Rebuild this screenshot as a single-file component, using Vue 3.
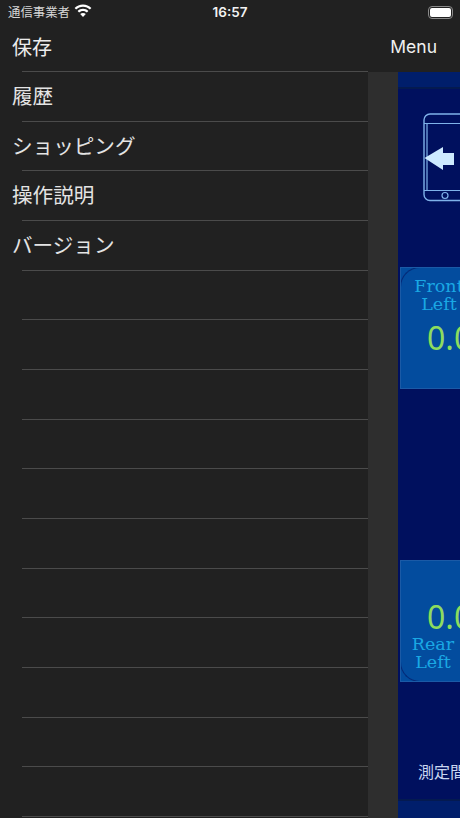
<script setup>
const labels = ['履歴', 'ショッピング', '操作説明', 'バージョン', '', '', '', '', '', '', '', '', '', '', '', '']
</script>

<template>
  <div class="screen">
    <header class="status">
      <div class="status-left">
        <span class="carrier">通信事業者</span>
        <svg class="wifi" viewBox="0 0 18 13" width="18" height="13" aria-hidden="true">
          <path d="M9 0.6C5.7 0.6 2.8 1.9 0.6 4l1.5 1.6C3.9 3.9 6.3 2.8 9 2.8s5.1 1.1 6.9 2.8L17.4 4C15.2 1.9 12.3 0.6 9 0.6z" fill="#fff" />
          <path d="M9 4.8c-2.1 0-4 .8-5.4 2.2l1.5 1.6C6.1 7.6 7.5 7 9 7s2.9.6 3.9 1.6L14.4 7C13 5.6 11.1 4.8 9 4.8z" fill="#fff" />
          <path d="M9 9c-1.1 0-2 .4-2.8 1.1L9 13l2.8-2.9C11 9.4 10.1 9 9 9z" fill="#fff" />
        </svg>
      </div>
      <span class="time">16:57</span>
      <div class="battery"><i class="battery-level"></i></div>
    </header>

    <nav class="nav">
      <span class="nav-title">保存</span>
      <span class="nav-menu">Menu</span>
    </nav>

    <main class="body">
      <section class="list">
        <div class="sep"></div>
        <template v-for="(label, i) in labels" :key="i">
          <div class="row">{{ label }}</div>
          <div class="sep"></div>
        </template>
      </section>

      <div class="strip"></div>

      <section class="panel">
        <div class="band"></div>
        <svg class="phone" viewBox="0 0 42 89" width="42" height="89" aria-hidden="true">
          <rect x="1" y="1" width="42" height="86.5" rx="6" fill="none" stroke="#7fb2ea" stroke-width="1.4" />
          <path d="M1 10.5H43M1 77.5H43M4 10.5V77.500" fill="none" stroke="#7fb2ea" stroke-width="1.2" />
          <circle cx="22" cy="82.500" r="3" fill="none" stroke="#7fb2ea" stroke-width="1.2" />
          <path d="M1.500 45 20 34V40H31V52H20V57z" fill="#cdeaff" />
        </svg>

        <article class="card card-front">
          <div class="name name-front">Front<br />Left</div>
          <div class="value value-front">0.0</div>
        </article>

        <article class="card card-rear">
          <div class="value value-rear">0.0</div>
          <div class="name name-rear">Rear<br />Left</div>
        </article>

        <div class="interval">測定間隔</div>
        <div class="foot"></div>
      </section>
    </main>
  </div>
</template>

<style>
html,
body {
  margin: 0;
  background: #212121;
}
</style>

<style scoped>
.screen {
  width: 460px;
  height: 818px;
  overflow: hidden;
  background: #212121;
  color: #ececec;
  font-family: "Noto Sans CJK JP", "Noto Sans", sans-serif;
  display: flex;
  flex-direction: column;
}

.status {
  height: 24px;
  flex: none;
  display: grid;
  grid-template-columns: 1fr auto 1fr;
  align-items: center;
  padding: 0 8px;
  box-sizing: border-box;
}
.status-left {
  display: flex;
  align-items: center;
  gap: 4px;
}
.carrier {
  font-size: 12.4px;
  color: #d6d6d6;
  line-height: 24px;
}
.wifi {
  margin-top: -3px;
}
.time {
  font-family: Inter, "Liberation Sans", sans-serif;
  font-size: 13.5px;
  font-weight: 600;
  color: #f2f2f2;
}
.battery {
  justify-self: end;
  width: 25px;
  height: 13px;
  box-sizing: border-box;
  border: 1px solid #8a8a8a;
  border-radius: 4px;
  padding: 1px;
  margin-right: -1px;
  display: flex;
}
.battery-level {
  flex: 1;
  background: #fff;
  border-radius: 2px;
}

.nav {
  height: 47px;
  flex: none;
  display: flex;
  align-items: center;
  justify-content: space-between;
  padding: 0 23px 3px 12px;
  box-sizing: border-box;
}
.nav-title {
  font-size: 20px;
}
.nav-menu {
  font-family: Inter, "Liberation Sans", sans-serif;
  font-size: 17.5px;
  color: #f0f0f0;
}

.body {
  flex: 1;
  min-height: 0;
  display: flex;
}
.list {
  width: 368px;
  flex: none;
}
.row {
  height: 48.67px;
  display: flex;
  align-items: center;
  padding: 0 0 2px 12px;
  box-sizing: border-box;
  font-size: 20.6px;
  line-height: 1;
  color: #e4e4e4;
}
.sep {
  height: 1px;
  margin-left: 22px;
  background: #4b4b4b;
}
.strip {
  width: 30px;
  flex: none;
  margin-top: 1px;
  background: #2e2e2e;
}

.panel {
  flex: 1;
  min-width: 0;
  margin-top: 1px;
  overflow: hidden;
  background: #00105e;
  display: flex;
  flex-direction: column;
}
.band {
  height: 15px;
  flex: none;
  background: #001e6b;
  border-bottom: 2px solid #041a50;
}
.phone {
  flex: none;
  margin: 24px 0 0 25px;
  overflow: visible;
}

.card {
  position: relative;
  flex: none;
  width: 90px;
  height: 122px;
  margin-left: 2px;
  box-sizing: border-box;
  border: 1px solid #1b5aa6;
  background: #034c9e;
  overflow: hidden;
}
.card::before {
  content: "";
  position: absolute;
  left: -1px;
  width: 40px;
  height: 40px;
  border: 1px solid #052a78;
  box-sizing: border-box;
}
.card-front {
  margin-top: 65px;
  padding-top: 9px;
}
.card-front::before {
  top: -1px;
  border-radius: 20px 0 0 0;
  border-width: 1.5px 0 0 1.5px;
}
.card-rear {
  margin-top: 171px;
  padding-top: 38px;
}
.card-rear::before {
  bottom: -1px;
  border-radius: 0 0 0 20px;
  border-width: 0 0 1.5px 1.5px;
}
.name {
  position: relative;
  width: 78px;
  font-family: "DejaVu Serif", serif;
  font-size: 17.5px;
  line-height: 18px;
  text-align: center;
  color: #1aa8e4;
}
.name-front {
  margin-left: -1px;
}
.name-rear {
  margin-top: 0;
  margin-left: -7px;
}
.value {
  font-family: "Noto Sans", sans-serif;
  font-size: 32px;
  line-height: 36px;
  color: #8ddc5e;
  white-space: nowrap;
  padding-left: 26px;
}
.value-front {
  margin-top: 7px;
}

.interval {
  flex: none;
  margin: 78px 0 0 20px;
  white-space: nowrap;
  font-size: 16px;
  line-height: 22px;
  color: #c9d5f0;
}
.foot {
  flex: 1;
  margin-top: 17px;
  background: #001e6b;
  border-top: 2px solid #041a50;
}
</style>
